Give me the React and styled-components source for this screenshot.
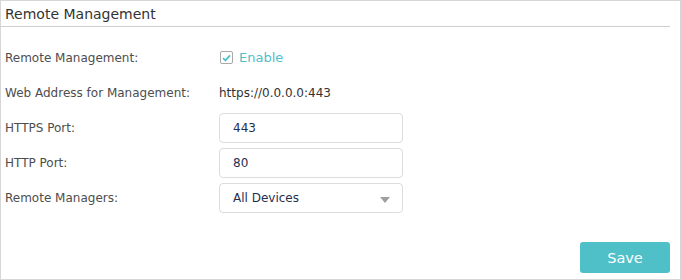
import React from "react";
import styled, { createGlobalStyle } from "styled-components";

const Global = createGlobalStyle`
  html, body { margin: 0; padding: 0; background: #fff; }
  * { box-sizing: border-box; }
`;

const Page = styled.div`
  width: 681px;
  height: 280px;
  border: 1px solid #d6d6d6;
  display: flex;
  flex-direction: column;
  font-family: "DejaVu Sans", Verdana, sans-serif;
  font-size: 12px;
  color: #4d4d4d;
`;

const Header = styled.div`
  height: 26px;
  margin-right: 10px;
  padding-left: 4px;
  border-bottom: 1px solid #cfcfcf;
  display: flex;
  align-items: center;
  font-size: 14px;
  color: #333;
`;

const Form = styled.div`
  display: flex;
  flex-direction: column;
  gap: 5px;
  padding-top: 15px;
`;

const Row = styled.div`
  display: grid;
  grid-template-columns: 214px 184px;
  align-items: center;
  height: ${(p) => p.$h || 30}px;
  padding-left: 4px;
`;

const Label = styled.div`
  color: #4d4d4d;
`;

const Value = styled.div`
  color: #333;
`;

const CheckWrap = styled.label`
  display: flex;
  align-items: center;
  gap: 6px;
  color: #4fc0cb;
  font-size: 13px;
  padding-left: 1px;
`;

const Box = styled.span`
  width: 13px;
  height: 13px;
  border: 1px solid #a8a8a8;
  border-radius: 2px;
  display: flex;
  align-items: center;
  justify-content: center;
  background: #fff;
`;

const Input = styled.div`
  height: 30px;
  border: 1px solid #dcdcdc;
  border-radius: 4px;
  display: flex;
  align-items: center;
  padding-left: 13px;
  color: #1f2f4f;
  position: relative;
`;

const Arrow = styled.span`
  position: absolute;
  right: 12px;
  top: 13px;
  width: 0;
  height: 0;
  border-left: 5px solid transparent;
  border-right: 5px solid transparent;
  border-top: 6px solid #a0a0a0;
`;

const Footer = styled.div`
  margin-top: auto;
  display: flex;
  justify-content: flex-end;
  padding: 0 10px 6px 0;
`;

const Button = styled.button`
  width: 90px;
  height: 31px;
  border: none;
  border-radius: 3px;
  background: #4fbfc8;
  color: #fff;
  font-family: "DejaVu Sans", Verdana, sans-serif;
  font-size: 14.5px;
  padding: 0;
`;

export default function App() {
  return (
    <>
      <Global />
      <Page>
        <Header>Remote Management</Header>
        <Form>
          <Row $h={31}>
            <Label>Remote Management:</Label>
            <CheckWrap>
              <Box>
                <svg width="9" height="8" viewBox="0 0 9 8">
                  <path d="M1 4.2 L3.4 6.4 L8 1.4" fill="none" stroke="#4fc0cb" strokeWidth="1.8" />
                </svg>
              </Box>
              Enable
            </CheckWrap>
          </Row>
          <Row>
            <Label>Web Address for Management:</Label>
            <Value>https://0.0.0.0:443</Value>
          </Row>
          <Row>
            <Label>HTTPS Port:</Label>
            <Input>443</Input>
          </Row>
          <Row>
            <Label>HTTP Port:</Label>
            <Input>80</Input>
          </Row>
          <Row>
            <Label>Remote Managers:</Label>
            <Input>
              All Devices
              <Arrow />
            </Input>
          </Row>
        </Form>
        <Footer>
          <Button>Save</Button>
        </Footer>
      </Page>
    </>
  );
}
